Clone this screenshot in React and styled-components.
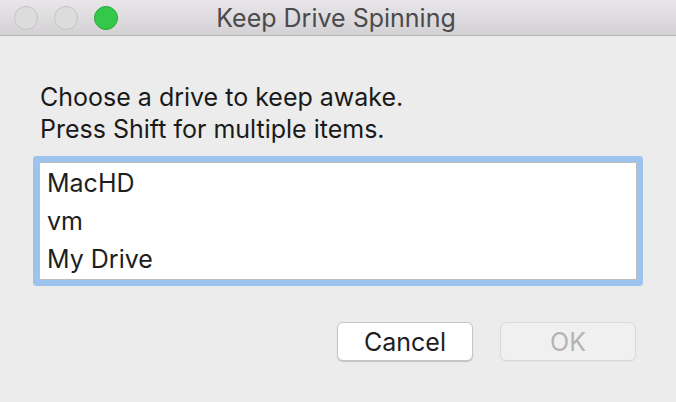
import React, { useState } from 'react';
import styled, { createGlobalStyle } from 'styled-components';

const GlobalStyle = createGlobalStyle`
  html, body {
    margin: 0;
    padding: 0;
    background: #ececec;
  }
  * {
    box-sizing: border-box;
  }
`;

const Window = styled.div`
  width: 676px;
  height: 402px;
  display: flex;
  flex-direction: column;
  background: #ececec;
  font-family: Inter, 'Liberation Sans', sans-serif;
  overflow: hidden;
`;

const TitleBar = styled.div`
  height: 36px;
  display: grid;
  grid-template-columns: 1fr auto 1fr;
  align-items: center;
  background: linear-gradient(to bottom, #e8e6e8, #d3d1d3);
  border-bottom: 1px solid #b3b1b3;
`;

const Lights = styled.div`
  display: flex;
  gap: 16px;
  padding-left: 14px;
`;

const Light = styled.span`
  width: 24px;
  height: 24px;
  border-radius: 50%;
  background: ${(p) => (p.$active ? '#34c84a' : '#dcdcdc')};
  border: 1px solid ${(p) => (p.$active ? '#2aa63b' : '#c4c4c4')};
`;

const Title = styled.div`
  font-size: 25px;
  color: #4c4a4c;
  white-space: nowrap;
  padding-right: 4px;
`;

const Content = styled.div`
  flex: 1;
  display: flex;
  flex-direction: column;
  padding: 45px 39px 0 39px;
`;

const Prompt = styled.div`
  font-size: 25px;
  line-height: 32px;
  color: #1a1a1a;
  padding-left: 1px;
`;

const ListBox = styled.div`
  margin-top: 17px;
  height: 118px;
  background: #fff;
  border: 1px solid #bcbcbc;
  box-shadow: 0 0 0 6px #9dc3ef;
  border-radius: 1px;
  padding: 1px 0 0 7px;
`;

const Item = styled.div`
  font-size: 25px;
  line-height: 38px;
  color: #1e1e1e;
  cursor: default;
`;

const Buttons = styled.div`
  margin-top: 42px;
  display: flex;
  justify-content: flex-end;
  gap: 27px;
  padding-right: 1px;
`;

const Button = styled.button`
  width: 136px;
  height: 39px;
  border-radius: 6px;
  font-family: inherit;
  font-size: 25px;
  padding: 0;
  color: ${(p) => (p.disabled ? '#b4b4b4' : '#1e1e1e')};
  background: ${(p) => (p.disabled ? '#f0f0f0' : '#ffffff')};
  border: 1px solid ${(p) => (p.disabled ? '#dadada' : '#c6c6c6')};
  box-shadow: ${(p) => (p.disabled ? '0 1px 0 rgba(0,0,0,0.04)' : '0 1px 1px rgba(0,0,0,0.18)')};
`;

const drives = ['MacHD', 'vm', 'My Drive'];

const App = () => {
  const [selected] = useState([]);

  return (
    <>
      <GlobalStyle />
      <Window>
        <TitleBar>
          <Lights>
            <Light />
            <Light />
            <Light $active />
          </Lights>
          <Title>Keep Drive Spinning</Title>
          <div />
        </TitleBar>
        <Content>
          <Prompt>
            Choose a drive to keep awake.
            <br />
            Press Shift for multiple items.
          </Prompt>
          <ListBox>
            {drives.map((d) => (
              <Item key={d}>{d}</Item>
            ))}
          </ListBox>
          <Buttons>
            <Button>Cancel</Button>
            <Button disabled={selected.length === 0}>OK</Button>
          </Buttons>
        </Content>
      </Window>
    </>
  );
};

export default App;
